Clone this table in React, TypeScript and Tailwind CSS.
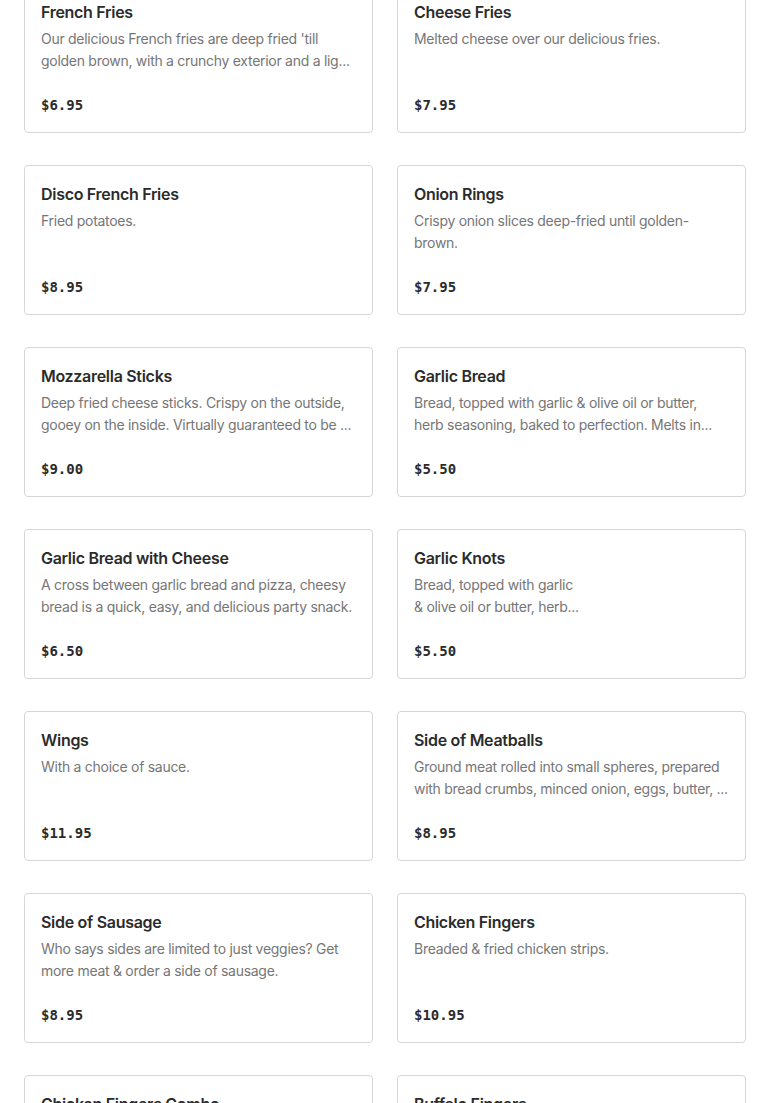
const items = [
  { name: "French Fries", desc: ["Our delicious French fries are deep fried 'till", "golden brown, with a crunchy exterior and a lig..."], price: "$6.95" },
  { name: "Cheese Fries", desc: ["Melted cheese over our delicious fries."], price: "$7.95" },
  { name: "Disco French Fries", desc: ["Fried potatoes."], price: "$8.95" },
  { name: "Onion Rings", desc: ["Crispy onion slices deep-fried until golden-", "brown."], price: "$7.95" },
  { name: "Mozzarella Sticks", desc: ["Deep fried cheese sticks. Crispy on the outside,", "gooey on the inside. Virtually guaranteed to be ..."], price: "$9.00" },
  { name: "Garlic Bread", desc: ["Bread, topped with garlic & olive oil or butter,", "herb seasoning, baked to perfection. Melts in..."], price: "$5.50" },
  { name: "Garlic Bread with Cheese", desc: ["A cross between garlic bread and pizza, cheesy", "bread is a quick, easy, and delicious party snack."], price: "$6.50" },
  { name: "Garlic Knots", desc: ["Bread, topped with garlic", "& olive oil or butter, herb..."], price: "$5.50" },
  { name: "Wings", desc: ["With a choice of sauce."], price: "$11.95" },
  { name: "Side of Meatballs", desc: ["Ground meat rolled into small spheres, prepared", "with bread crumbs, minced onion, eggs, butter, ..."], price: "$8.95" },
  { name: "Side of Sausage", desc: ["Who says sides are limited to just veggies? Get", "more meat & order a side of sausage."], price: "$8.95" },
  { name: "Chicken Fingers", desc: ["Breaded & fried chicken strips."], price: "$10.95" },
  { name: "Chicken Fingers Combo", desc: ["Chicken fingers served with fries."], price: "$13.95" },
  { name: "Buffalo Fingers", desc: ["Chicken fingers tossed in buffalo sauce."], price: "$11.95" },
];

function MenuCard({ name, desc, price }: { name: string; desc: string[]; price: string }) {
  return (
    <div className="h-[150px] border border-[#d6d6d6] rounded-[4px] bg-white pl-4 pr-3 pt-4 pb-4 flex flex-col">
      <h3 className="text-[16px] leading-6 font-semibold text-[#2b2b2b] tracking-[-0.3px]">{name}</h3>
      <div className="mt-1 text-[14px] leading-[22px] text-[#767676] tracking-[-0.28px] h-[44px]">
        {desc.map((line) => (
          <p key={line} className="whitespace-nowrap">
            {line}
          </p>
        ))}
      </div>
      <div className="mt-auto text-[14px] leading-[22px] font-bold text-[#2b2b2b] font-['DejaVu_Sans_Mono',monospace]">
        {price}
      </div>
    </div>
  );
}

export default function App() {
  return (
    <div className="bg-white min-h-screen overflow-hidden h-[1103px] font-['Inter',sans-serif]">
      <div className="px-6 -mt-[17px] grid grid-cols-2 gap-x-6 gap-y-8">
        {items.map((it) => (
          <MenuCard key={it.name} {...it} />
        ))}
      </div>
    </div>
  );
}
